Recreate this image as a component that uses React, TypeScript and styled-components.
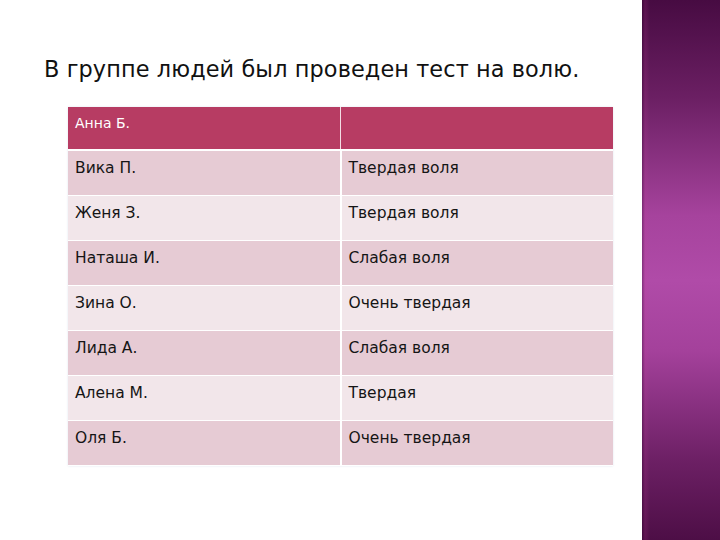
import React from "react";
import styled, { createGlobalStyle } from "styled-components";

const GlobalStyle = createGlobalStyle`
   html, body {
      margin: 0;
      padding: 0;
      background: #ffffff;
   }
   body {
      font-family: "DejaVu Sans", "Liberation Sans", sans-serif;
   }
`;

type Row = { name: string; will: string };

const rows: Row[] = [
   { name: "Вика П.", will: "Твердая воля" },
   { name: "Женя З.", will: "Твердая воля" },
   { name: "Наташа И.", will: "Слабая воля" },
   { name: "Зина О.", will: "Очень твердая" },
   { name: "Лида А.", will: "Слабая воля" },
   { name: "Алена М.", will: "Твердая" },
   { name: "Оля Б.", will: "Очень твердая" },
];

const App = (): JSX.Element => {
   return (
      <>
         <GlobalStyle />
         <Slide>
            <Content>
               <Title>В группе людей был проведен тест на волю.</Title>
               <Table>
                  <thead>
                     <tr>
                        <HeadCell>Анна Б.</HeadCell>
                        <HeadCell></HeadCell>
                     </tr>
                  </thead>
                  <tbody>
                     {rows.map((r, i) => (
                        <BodyRow key={r.name} $odd={i % 2 === 0}>
                           <Cell>{r.name}</Cell>
                           <Cell>{r.will}</Cell>
                        </BodyRow>
                     ))}
                  </tbody>
               </Table>
            </Content>
            <SidePanel />
         </Slide>
      </>
   );
};

export default App;

const Slide = styled.div`
   display: flex;
   width: 720px;
   height: 540px;
   overflow: hidden;
`;

const Content = styled.div`
   flex: 1;
   padding: 56px 0 0 44px;
`;

const Title = styled.h1`
   margin: 0 0 25px 0;
   font-family: "DejaVu Sans", sans-serif;
   font-weight: normal;
   font-size: 22.4px;
   line-height: 26px;
   letter-spacing: 0.1px;
   color: #111111;
   white-space: nowrap;
`;

const Table = styled.table`
   margin-left: 24px;
   width: 545px;
   border-collapse: collapse;
   table-layout: fixed;
   box-shadow: 0 0 2px rgba(180, 200, 220, 0.4);
`;

const HeadCell = styled.th`
   height: 43px;
   box-sizing: border-box;
   padding: 8px 7px 0;
   vertical-align: top;
   text-align: left;
   font-weight: normal;
   font-size: 14px;
   color: #ffffff;
   background: #b73c63;
   border-right: 1px solid #f3dde4;
   border-bottom: 2px solid #ffffff;
   &:last-child {
      border-right: none;
   }
`;

const BodyRow = styled.tr<{ $odd: boolean }>`
   background: ${(p) => (p.$odd ? "#e6cbd4" : "#f2e6ea")};
`;

const Cell = styled.td`
   height: 45px;
   box-sizing: border-box;
   padding: 8px 7px 0;
   vertical-align: top;
   font-size: 15.5px;
   color: #151515;
   border-right: 2px solid #ffffff;
   border-bottom: 1px solid #ffffff;
   &:last-child {
      border-right: none;
   }
`;

const SidePanel = styled.div`
   flex: 0 0 78px;
   height: 540px;
   background:
      linear-gradient(90deg, rgba(40, 0, 40, 0.35) 0, rgba(200, 60, 150, 0.15) 3px, rgba(0, 0, 0, 0) 8px),
      linear-gradient(
         180deg,
         #470b42 0%,
         #6b1f63 18%,
         #a6439d 40%,
         #b04ba8 52%,
         #a4419b 65%,
         #6d2065 85%,
         #4d0e46 100%
      );
`;
